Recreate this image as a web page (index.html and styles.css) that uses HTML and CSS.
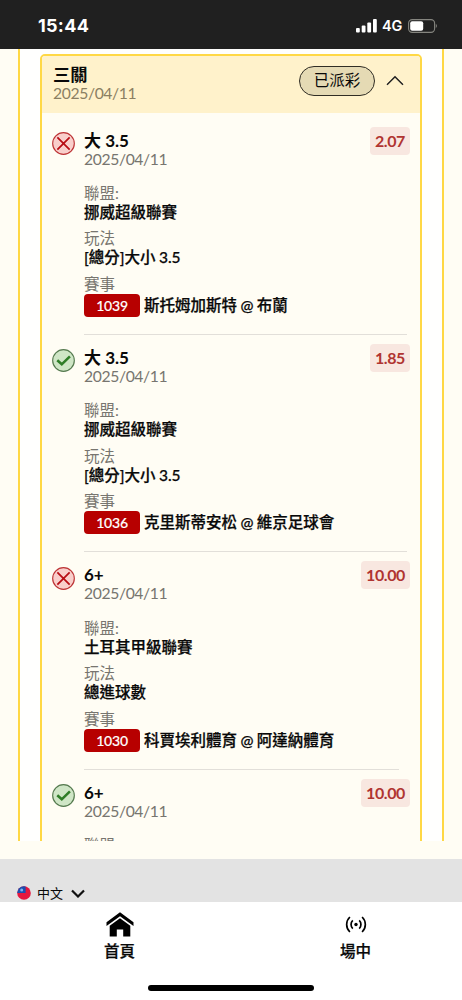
FILE: index.html
```
<!DOCTYPE html>
<html lang="zh-Hant">
<head>
<meta charset="utf-8">
<meta name="viewport" content="width=device-width, initial-scale=1">
<title>三關</title>
<link rel="stylesheet" href="styles.css">
</head>
<body>
<svg class="defs" width="0" height="0">
  <symbol id="lost" viewBox="0 0 24 24"><circle cx="12" cy="12" r="11.3" fill="#f9cfcb" stroke="#bd3436" stroke-width="1.2"/><path d="M5.6 5.6 18.4 18.4M18.4 5.6 5.6 18.4" fill="none" stroke="#b80d14" stroke-width="1.8"/></symbol>
  <symbol id="won" viewBox="0 0 24 24"><circle cx="12" cy="12" r="11.3" fill="#cfe6c6" stroke="#557a4f" stroke-width="1.2"/><path d="M5.5 11.8 10.2 16 18.7 7.7" fill="none" stroke="#2f7d27" stroke-width="2.7"/></symbol>
</svg>
<div class="screen">
  <header class="status">
    <span class="time">15:44</span>
    <div class="signals">
      <svg class="bars" width="21" height="14" viewBox="0 0 21 14" fill="#fff"><rect x="0" y="9" width="3.8" height="4.5" rx="1"/><rect x="5.7" y="6.5" width="3.8" height="7" rx="1"/><rect x="11.3" y="3.5" width="3.8" height="10" rx="1"/><rect x="17" y="0" width="3.8" height="13.5" rx="1"/></svg>
      <span class="net">4G</span>
      <svg class="battery" width="30" height="14" viewBox="0 0 30 14"><rect x=".6" y=".6" width="26" height="12.8" rx="3.6" fill="none" stroke="#85857f" stroke-width="1.1"/><rect x="2.2" y="2.2" width="13" height="9.6" rx="2" fill="#fff"/><path d="M27.8 4.8Q30 7 27.8 9.2Z" fill="#85857f"/></svg>
    </div>
  </header>
  <main class="content">
    <div class="panel">
      <section class="card">
        <div class="card-head">
          <div class="heading"><div class="card-title">三關</div><div class="date">2025/04/11</div></div>
          <span class="pill">已派彩</span>
          <svg class="caret" width="18" height="11" viewBox="0 0 18 11"><path d="M1 9.7 9 1.7 17 9.7" fill="none" stroke="#222" stroke-width="1.5"/></svg>
        </div>
        <div class="bets">
          <article class="bet">
            <svg class="result"><use href="#lost"/></svg>
            <div class="body">
              <div class="pick">大 3.5</div><div class="date">2025/04/11</div>
              <dl><dt>聯盟:</dt><dd>挪威超級聯賽</dd><dt>玩法</dt><dd>[總分]大小 3.5</dd><dt>賽事</dt><dd class="match"><span class="code">1039</span>斯托姆加斯特 @ 布蘭</dd></dl>
            </div>
            <span class="odds">2.07</span>
          </article>
          <article class="bet">
            <svg class="result"><use href="#won"/></svg>
            <div class="body">
              <div class="pick">大 3.5</div><div class="date">2025/04/11</div>
              <dl><dt>聯盟:</dt><dd>挪威超級聯賽</dd><dt>玩法</dt><dd>[總分]大小 3.5</dd><dt>賽事</dt><dd class="match"><span class="code">1036</span>克里斯蒂安松 @ 維京足球會</dd></dl>
            </div>
            <span class="odds">1.85</span>
          </article>
          <article class="bet short-rule">
            <svg class="result"><use href="#lost"/></svg>
            <div class="body">
              <div class="pick">6+</div><div class="date">2025/04/11</div>
              <dl><dt>聯盟:</dt><dd>土耳其甲級聯賽</dd><dt>玩法</dt><dd>總進球數</dd><dt>賽事</dt><dd class="match"><span class="code">1030</span>科賈埃利體育 @ 阿達納體育</dd></dl>
            </div>
            <span class="odds">10.00</span>
          </article>
          <article class="bet">
            <svg class="result"><use href="#won"/></svg>
            <div class="body">
              <div class="pick">6+</div><div class="date">2025/04/11</div>
              <dl><dt>聯盟:</dt></dl>
            </div>
            <span class="odds">10.00</span>
          </article>
        </div>
      </section>
    </div>
  </main>
  <div class="language">
    <svg width="14" height="14" viewBox="0 0 14 14"><circle cx="7" cy="7" r="6.8" fill="#e5173f"/><path d="M.2 7A6.8 6.8 0 0 1 7 .2Q8 .2 8.6.5V7Z" fill="#1c4eb0"/><circle cx="4.7" cy="4" r="1.5" fill="#7eb2ee"/></svg>
    <span>中文</span>
    <svg class="down" width="14" height="9" viewBox="0 0 14 9"><path d="M1 1.5 7 7.5 13 1.5" fill="none" stroke="#111" stroke-width="2.2"/></svg>
  </div>
  <nav class="tabs">
    <a class="tab"><svg width="28" height="25" viewBox="0 0 28 25"><path d="M14 .3 27.5 10.2V14L14 4.3.5 14V10.2Z"/><path d="M14 6.3 24.3 13.7V24.5H17.2V17.5H10.8V24.5H3.7V13.7Z"/></svg><span>首頁</span></a>
    <a class="tab"><svg width="22" height="25" viewBox="0 0 22 25" fill="none" stroke="#000" stroke-width="1.7"><circle cx="11" cy="12.5" r="1.7" fill="#000" stroke="none"/><path d="M7.8 8.4A5.7 5.7 0 0 0 7.8 16.6M14.2 8.4A5.7 5.7 0 0 1 14.2 16.6M4.9 5A10.3 10.3 0 0 0 4.9 20M17.1 5A10.3 10.3 0 0 1 17.1 20"/></svg><span>場中</span></a>
    <div class="home-bar"></div>
  </nav>
</div>
</body>
</html>
```
FILE: styles.css
```
* { box-sizing: border-box; }
body, dl, dd { margin: 0; }
body { font: 15.5px/19px Lato, "Noto Sans CJK TC", sans-serif; color: #090909; }
svg { display: block; flex: none; }
.defs { position: absolute; }
.screen { width: 462px; height: 1000px; display: flex; flex-direction: column; overflow: hidden; background: #fffdf4; }
.status { flex: none; height: 49px; background: #202020; color: #fff; display: flex; justify-content: space-between; padding: 2px 24px 0 38px; align-items: center; font-family: Inter, sans-serif; }
.time { font-size: 18px; font-weight: 700; letter-spacing: .3px; }
.signals { display: flex; align-items: center; }
.net { font-size: 14.5px; font-weight: 600; letter-spacing: -.3px; margin: 0 6px 0 5px; }
.content { flex: none; height: 792px; padding: 0 18px; overflow: hidden; }
.panel { height: 1000px; border: solid #ffd845; border-width: 0 2px; background: #fffffe; padding: 5px 20px 0; }
.card { height: 1000px; border: 2px solid #ffd845; border-radius: 5px; background: #fffdf4; overflow: hidden; }
.card-head { height: 57px; padding: 0 16px 0 11px; display: flex; align-items: center; background: #fff2cb; }
.heading { flex: 1; margin-top: -2px; }
.card-title { font-size: 17.3px; font-weight: 700; }
.date { color: #77756f; font-size: 15.7px; letter-spacing: -.37px; }
.card-head .date { color: #8b7f62; }
.pill { height: 30px; width: 76px; border: 1.3px solid #302d24; border-radius: 15px; background: #e5dab4; display: flex; align-items: center; justify-content: center; margin: -8px 11px 0 0; }
.caret { margin-top: -9px; }
.bets { padding: 4.5px 10px 0 10px; }
.bet { position: relative; height: 217.4px; display: flex; padding-top: 13px; }
.bet::after { content: ""; position: absolute; left: 32px; right: 3px; bottom: 0; height: 1px; background: #e2dfd9; }
.bet.short-rule::after { right: 11px; }
.result { width: 23px; height: 23px; margin: 1.4px 9px 0 0; }
.body { flex: 1; }
.pick { font-size: 17px; font-weight: 700; }
dl { padding-top: 15.4px; }
dt { color: #77756f; height: 19px; }
dd { height: 26.6px; font-weight: 500; -webkit-text-stroke: .25px #090909; white-space: nowrap; word-spacing: -.5px; }
.match { display: flex; align-items: center; height: 23px; }
.code { width: 56px; height: 23px; border-radius: 4px; background: #b70000; color: #fff; font-size: 14px; -webkit-text-stroke: .15px #fff; letter-spacing: -.2px; display: flex; align-items: center; justify-content: center; margin-right: 4px; }
.odds { height: 28px; padding: 0 5px; margin-top: -4px; border-radius: 4px; background: #f8e7e0; color: #b03431; font-size: 16px; font-weight: 700; line-height: 28px; letter-spacing: -.4px; }
.language { flex: none; margin-top: 18px; height: 43px; padding: 25px 0 0 17px; background: #e3e3e3; display: flex; align-items: center; font-size: 13px; }
.language span { margin: 0 8px 0 6px; }
.tabs { position: relative; flex: 1; background: #fff; display: grid; grid-template-columns: 239px 1fr; padding-top: 10px; }
.tab { display: flex; flex-direction: column; align-items: center; gap: 5px; font-weight: 500; }
.tab span { -webkit-text-stroke: .25px #090909; }
.tab:nth-child(2) { padding-left: 10px; }
.home-bar { position: absolute; left: 148px; bottom: 9px; width: 166px; height: 6px; border-radius: 3px; background: #000; }
```
